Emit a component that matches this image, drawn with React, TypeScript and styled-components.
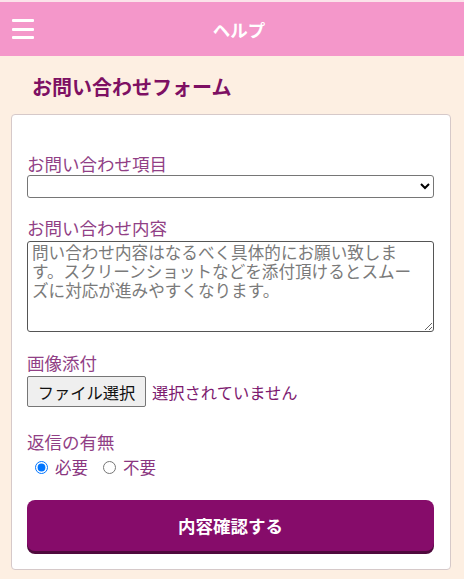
import React from 'react';
import styled, { createGlobalStyle } from 'styled-components';

const GlobalStyle = createGlobalStyle`
  html, body {
    margin: 0;
    padding: 0;
    background: #fdefe2;
    font-family: "Noto Sans CJK JP", "Noto Sans", sans-serif;
  }
`;

const Page = styled.div`
  min-height: 579px;
  background: #fdefe2;
  border-top: 2px solid #fbe3ea;
`;

const Header = styled.header`
  height: 54px;
  background: #f497ca;
  display: flex;
  align-items: center;
  justify-content: center;
  position: relative;
`;

const Burger = styled.button`
  position: absolute;
  left: 12px;
  top: 17px;
  width: 22px;
  height: 20px;
  padding: 0;
  border: none;
  background: transparent;
  display: flex;
  flex-direction: column;
  justify-content: space-between;
  span {
    display: block;
    height: 3px;
    background: #fff;
    border-radius: 1px;
  }
`;

const HeaderTitle = styled.h1`
  margin: 0 0 0 14px;
  font-size: 17.5px;
  font-weight: 700;
  color: #fff;
`;

const Heading = styled.h2`
  margin: 0;
  padding: 17px 0 13px 32px;
  font-size: 20px;
  font-weight: 700;
  color: #7e1063;
  line-height: 28px;
`;

const Card = styled.div`
  margin: 0 13px 0 11px;
  background: #fff;
  border: 1px solid #d6c9c9;
  border-radius: 4px;
  padding: 37px 16px 18px 15px;
`;

const Field = styled.div<{ $gap?: number }>`
  margin-bottom: ${(p) => p.$gap ?? 19}px;
`;

const Label = styled.label`
  display: block;
  font-size: 17.5px;
  line-height: 23px;
  color: #913f86;
`;

const Select = styled.select`
  display: block;
  width: 100%;
  height: 23px;
  border: 1px solid #767676;
  border-radius: 3px;
  background: #fff;
  font-size: 14px;
`;

const TextArea = styled.textarea`
  display: block;
  box-sizing: border-box;
  width: 100%;
  height: 91px;
  margin-top: 2px;
  border: 1px solid #555;
  border-radius: 3px;
  padding: 1px 2px 1px 4px;
  font-family: "Noto Sans CJK JP", sans-serif;
  font-size: 16.6px;
  line-height: 19px;
  resize: vertical;
  &::placeholder {
    color: #7a7a7a;
  }
`;

const FileRow = styled.div`
  display: flex;
  align-items: center;
  gap: 6px;
  margin-top: 2px;
`;

const FileButton = styled.label`
  box-sizing: border-box;
  height: 31px;
  width: 119px;
  display: flex;
  align-items: center;
  justify-content: center;
  border: 1px solid #767676;
  border-radius: 2px;
  background: #efefef;
  font-size: 16.3px;
  color: #111;
  cursor: pointer;
  input {
    display: none;
  }
`;

const FileStatus = styled.span`
  font-size: 16.3px;
  color: #7d1a70;
`;

const RadioRow = styled.div`
  display: flex;
  align-items: center;
  gap: 15px;
  height: 24px;
  margin-top: 2px;
  padding-left: 8px;
`;

const RadioOption = styled.label`
  display: flex;
  align-items: center;
  gap: 7px;
  font-size: 16.5px;
  color: #8a3680;
  input {
    margin: 0;
    width: 13px;
    height: 13px;
  }
`;

const Submit = styled.button`
  display: block;
  width: 100%;
  height: 51px;
  margin-top: 21px;
  border: none;
  border-radius: 8px;
  background: #860c6a;
  box-shadow: 0 3px 0 #4f0a3d;
  color: #fff;
  font-family: "Noto Sans CJK JP", sans-serif;
  font-size: 17.5px;
  font-weight: 700;
  cursor: pointer;
`;

const placeholderLines = [
  '問い合わせ内容はなるべく具体的にお願い致しま',
  'す。スクリーンショットなどを添付頂けるとスムー',
  'ズに対応が進みやすくなります。',
];

export default function App() {
  return (
    <>
      <GlobalStyle />
      <Page>
        <Header>
          <Burger aria-label="menu">
            <span />
            <span />
            <span />
          </Burger>
          <HeaderTitle>ヘルプ</HeaderTitle>
        </Header>
        <Heading>お問い合わせフォーム</Heading>
        <Card>
          <Field $gap={18}>
            <Label htmlFor="kind">お問い合わせ項目</Label>
            <Select id="kind" defaultValue="">
              <option value=""></option>
            </Select>
          </Field>
          <Field $gap={19}>
            <Label htmlFor="body">お問い合わせ内容</Label>
            <TextArea id="body" placeholder={placeholderLines.join('\n')} />
          </Field>
          <Field $gap={23}>
            <Label>画像添付</Label>
            <FileRow>
              <FileButton>
                ファイル選択
                <input type="file" accept="image/*" />
              </FileButton>
              <FileStatus>選択されていません</FileStatus>
            </FileRow>
          </Field>
          <Label>返信の有無</Label>
          <RadioRow>
            <RadioOption>
              <input type="radio" name="reply" defaultChecked />
              必要
            </RadioOption>
            <RadioOption>
              <input type="radio" name="reply" />
              不要
            </RadioOption>
          </RadioRow>
          <Submit type="button">内容確認する</Submit>
        </Card>
      </Page>
    </>
  );
}
